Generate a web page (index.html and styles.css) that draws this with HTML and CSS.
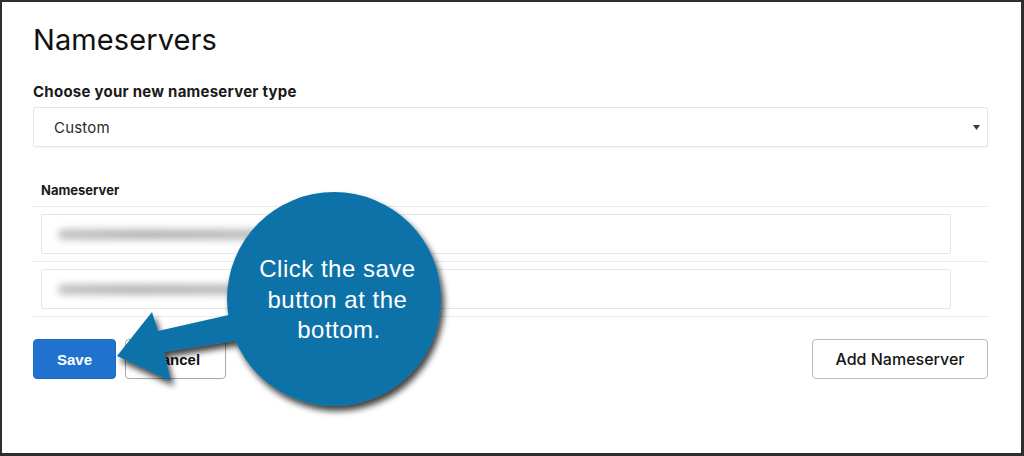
FILE: index.html
```html
<!DOCTYPE html>
<html lang="en">
<head>
<meta charset="utf-8">
<title>Nameservers</title>
<link rel="stylesheet" href="styles.css">
</head>
<body>
<div class="frame">
  <main class="panel">
    <h1 class="title">Nameservers</h1>
    <div class="field-label">Choose your new nameserver type</div>
    <div class="select">
      <span class="select-value">Custom</span>
      <svg class="caret" width="7" height="5" viewBox="0 0 7 5"><polygon points="0,0 7,0 3.5,5" fill="#3a3a3a"/></svg>
    </div>
    <div class="table">
      <div class="thead">Nameserver</div>
      <div class="row"><div class="input"><span class="blur blur-1"></span></div></div>
      <div class="row"><div class="input"><span class="blur blur-2"></span></div></div>
    </div>
    <div class="actions">
      <div class="actions-left">
        <button class="btn btn-save">Save</button>
        <button class="btn btn-cancel">Cancel</button>
      </div>
      <button class="btn btn-add">Add Nameserver</button>
    </div>
  </main>
  <svg class="callout" width="1024" height="456" viewBox="0 0 1024 456">
    <defs>
      <filter id="shadow" x="-20%" y="-20%" width="140%" height="140%">
        <feDropShadow dx="3" dy="5" stdDeviation="3" flood-color="#000" flood-opacity="0.75"/>
      </filter>
    </defs>
    <g filter="url(#shadow)" fill="#0b72a8">
      <polygon points="117,356 152,312 158,331 242,312 246,339 164,352 171,381"/>
      <circle cx="334" cy="299" r="107"/>
    </g>
    <text class="callout-text" x="341" text-anchor="middle">
      <tspan x="341" y="277">Click the save</tspan>
      <tspan x="341" y="308">button at the</tspan>
      <tspan x="339" y="338">bottom.</tspan>
    </text>
  </svg>
</div>
</body>
</html>
```

FILE: styles.css
```css
* { box-sizing: border-box; }

html, body {
  margin: 0;
  padding: 0;
  background: #ffffff;
}

.frame {
  position: relative;
  width: 1024px;
  height: 456px;
  border-style: solid;
  border-color: #2e2e2e;
  border-width: 2px 3px 3px 2px;
  background: #ffffff;
  overflow: hidden;
}

.panel {
  padding: 21px 33px 0 31px;
  font-family: Inter, "Noto Sans", sans-serif;
  color: #111111;
}

.title {
  margin: 0;
  font-size: 29px;
  line-height: 34px;
  font-weight: 400;
  color: #111111;
  letter-spacing: 0.1px;
}

.field-label {
  margin-top: 25px;
  font-size: 15px;
  line-height: 20px;
  font-weight: 700;
  letter-spacing: 0.25px;
  color: #1a1a1a;
}

.select {
  margin-top: 5px;
  height: 40px;
  border: 1px solid #e6e6e6;
  border-radius: 2px;
  display: flex;
  align-items: center;
  justify-content: space-between;
  padding: 0 7px 0 20px;
  box-shadow: 0 1px 1px rgba(0,0,0,0.03);
}

.select-value {
  font-size: 15px;
  letter-spacing: 0.2px;
  color: #2b2b2b;
}

.caret { display: block; }

.table {
  margin-top: 35px;
}

.thead {
  padding: 0 8px 8px;
  font-size: 13px;
  line-height: 16px;
  font-weight: 700;
  color: #1a1a1a;
  border-bottom: 1px solid #ebebeb;
}

.row {
  padding: 7px 0 7px 8px;
  border-bottom: 1px solid #ebebeb;
}

.input {
  width: 910px;
  height: 40px;
  border: 1px solid #e6e6e6;
  border-radius: 2px;
  display: flex;
  align-items: center;
  padding-left: 16px;
}

.blur {
  display: block;
  height: 11px;
  background: linear-gradient(90deg, #c4c4c4, #b8b8b8 40%, #c0c0c0);
  border-radius: 5px;
  filter: blur(3.5px);
}

.blur-1 { width: 205px; }
.blur-2 { width: 190px; }

.actions {
  margin-top: 22px;
  display: flex;
  justify-content: space-between;
  align-items: center;
}

.actions-left {
  display: flex;
  gap: 9px;
}

.btn {
  height: 40px;
  border-radius: 4px;
  padding: 0;
  margin: 0;
  cursor: pointer;
}

.btn-save {
  width: 83px;
  background: #1f73cf;
  border: 1px solid #1b6bc2;
  color: #ffffff;
  font-family: "Liberation Sans", Arial, sans-serif;
  font-weight: 700;
  font-size: 15px;
}

.btn-cancel {
  width: 101px;
  background: #ffffff;
  border: 1px solid #a8a8a8;
  color: #111111;
  font-family: "Liberation Sans", Arial, sans-serif;
  font-weight: 700;
  font-size: 15px;
}

.btn-add {
  width: 176px;
  background: #ffffff;
  border: 1px solid #bdbdbd;
  color: #151515;
  font-family: Inter, "Noto Sans", sans-serif;
  font-weight: 500;
  font-size: 16px;
}

.callout {
  position: absolute;
  left: -2px;
  top: -2px;
  pointer-events: none;
}

.callout-text {
  font-family: "Liberation Sans", Arial, sans-serif;
  font-size: 24px;
  letter-spacing: 0.5px;
  fill: #ffffff;
}
```
